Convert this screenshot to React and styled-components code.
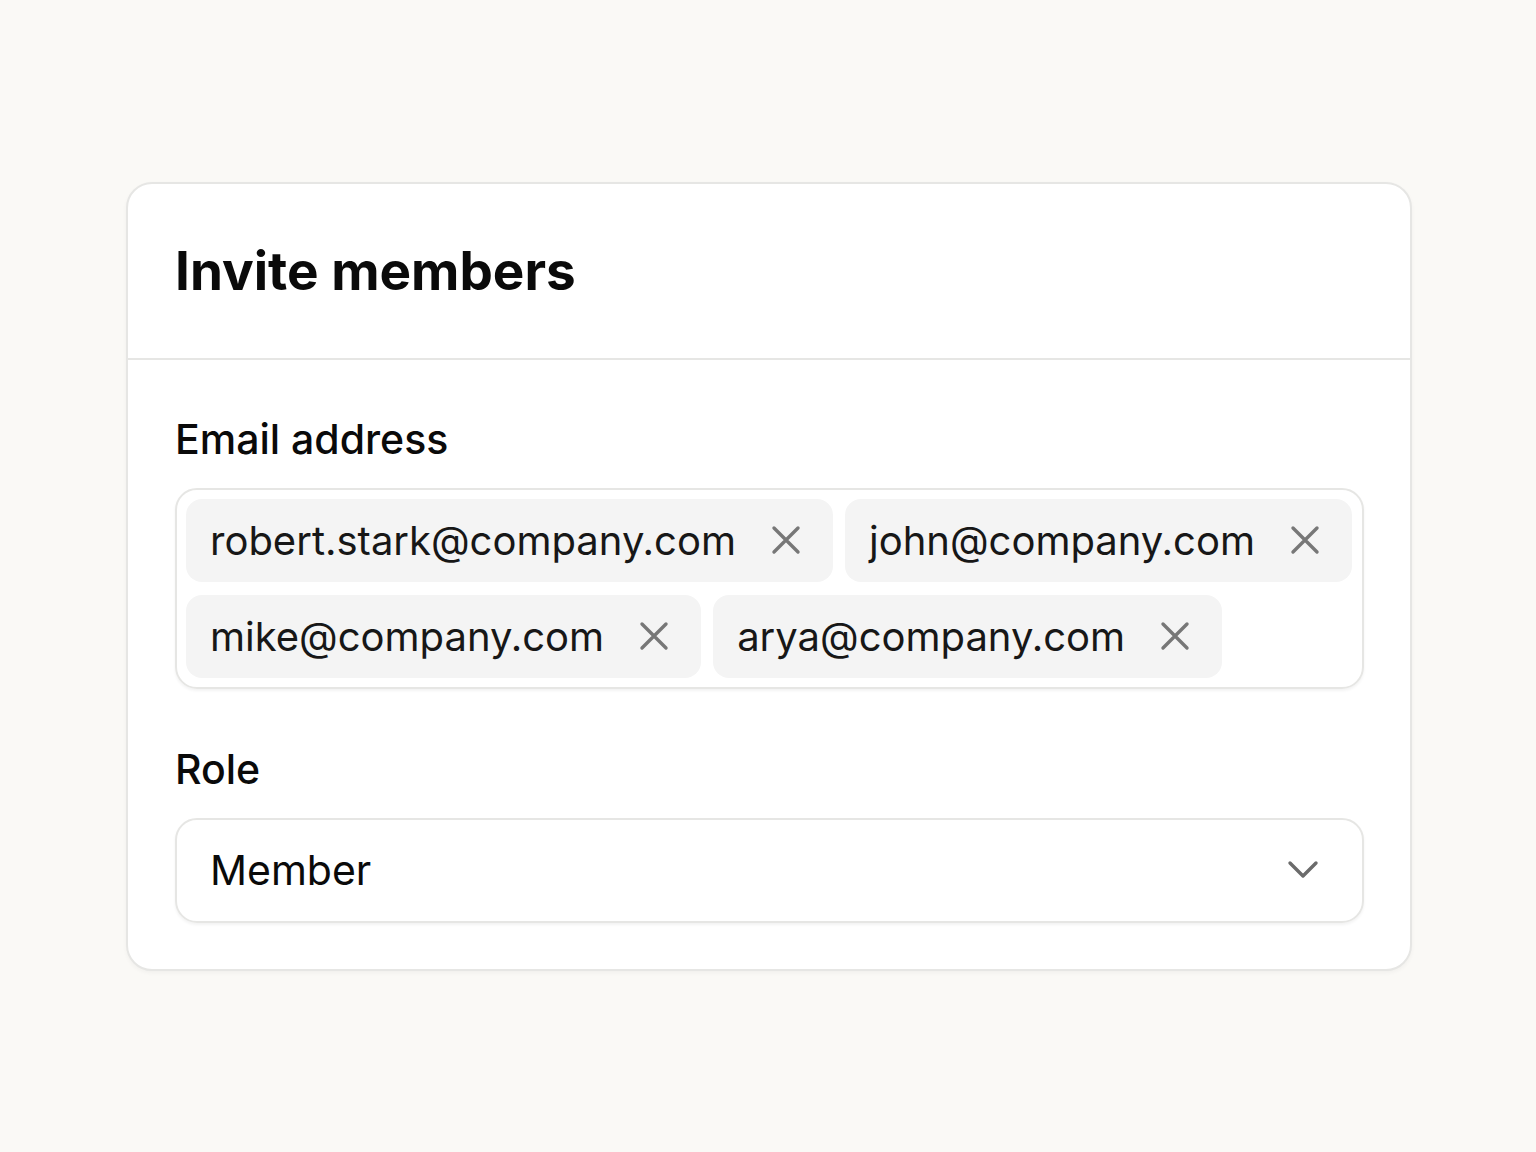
import styled, { createGlobalStyle } from "styled-components";

const GlobalStyle = createGlobalStyle`
    html, body {
        margin: 0;
        padding: 0;
        background: #faf9f6;
        font-family: Inter, "Noto Sans", "Liberation Sans", sans-serif;
        color: #0a0a0a;
    }
`;

const emails = [
    "robert.stark@company.com",
    "john@company.com",
    "mike@company.com",
    "arya@company.com",
];

function CloseIcon() {
    return (
        <svg width="32" height="32" viewBox="0 0 32 32" fill="none" stroke="currentColor" strokeWidth="3.4" strokeLinecap="round">
            <path d="M4 4L28 28M28 4L4 28" />
        </svg>
    );
}

function ChevronIcon() {
    return (
        <svg width="32" height="20" viewBox="0 0 32 20" fill="none" stroke="currentColor" strokeWidth="3.4" strokeLinecap="round" strokeLinejoin="round">
            <path d="M3 3L16 16L29 3" />
        </svg>
    );
}

export default function App() {
    return (
        <>
            <GlobalStyle />
            <Page>
                <Card>
                    <Header>
                        <Title>Invite members</Title>
                    </Header>
                    <Body>
                        <Field>
                            <Label>Email address</Label>
                            <TagInput>
                                {emails.map((email) => (
                                    <Chip key={email}>
                                        <span>{email}</span>
                                        <RemoveButton><CloseIcon /></RemoveButton>
                                    </Chip>
                                ))}
                            </TagInput>
                        </Field>
                        <Field>
                            <Label>Role</Label>
                            <Select>
                                <span>Member</span>
                                <Chevron><ChevronIcon /></Chevron>
                            </Select>
                        </Field>
                    </Body>
                </Card>
            </Page>
        </>
    );
}

const Page = styled.div`
    width: 1536px;
    height: 1152px;
    padding-left: 126px;
    display: flex;
    align-items: center;
    box-sizing: border-box;
`;

const Card = styled.div`
    width: 1286px;
    box-sizing: border-box;
    background: #ffffff;
    border: 2px solid #e6e6e4;
    border-radius: 26px;
    box-shadow: 0 2px 4px rgba(0, 0, 0, 0.04);
    display: flex;
    flex-direction: column;
`;

const Header = styled.div`
    padding: 48px 46px 48px 47px;
    border-bottom: 2px solid #e6e6e4;
`;

const Title = styled.h1`
    margin: 0;
    font-size: 53px;
    line-height: 78px;
    font-weight: 700;
`;

const Body = styled.div`
    padding: 50px 46px 46px 47px;
    display: flex;
    flex-direction: column;
    gap: 51px;
`;

const Field = styled.div`
    display: flex;
    flex-direction: column;
    gap: 20px;
`;

const Label = styled.div`
    font-size: 41px;
    line-height: 58px;
    font-weight: 500;
`;

const TagInput = styled.div`
    border: 2px solid #e6e6e4;
    border-radius: 22px;
    padding: 9px;
    display: flex;
    flex-wrap: wrap;
    gap: 13px 12px;
    box-shadow: 0 2px 3px rgba(0, 0, 0, 0.05);
`;

const Chip = styled.div`
    display: flex;
    align-items: center;
    gap: 34px;
    height: 83px;
    box-sizing: border-box;
    padding: 0 31px 0 24px;
    background: #f4f4f4;
    border-radius: 16px;
    font-size: 40px;
    color: #171717;
`;

const RemoveButton = styled.span`
    display: flex;
    color: #777777;
`;

const Select = styled.div`
    height: 105px;
    box-sizing: border-box;
    border: 2px solid #e6e6e4;
    border-radius: 22px;
    padding: 0 43px 0 33px;
    display: flex;
    align-items: center;
    justify-content: space-between;
    font-size: 41px;
    box-shadow: 0 2px 3px rgba(0, 0, 0, 0.05);
`;

const Chevron = styled.span`
    display: flex;
    color: #6b6b6b;
`;
